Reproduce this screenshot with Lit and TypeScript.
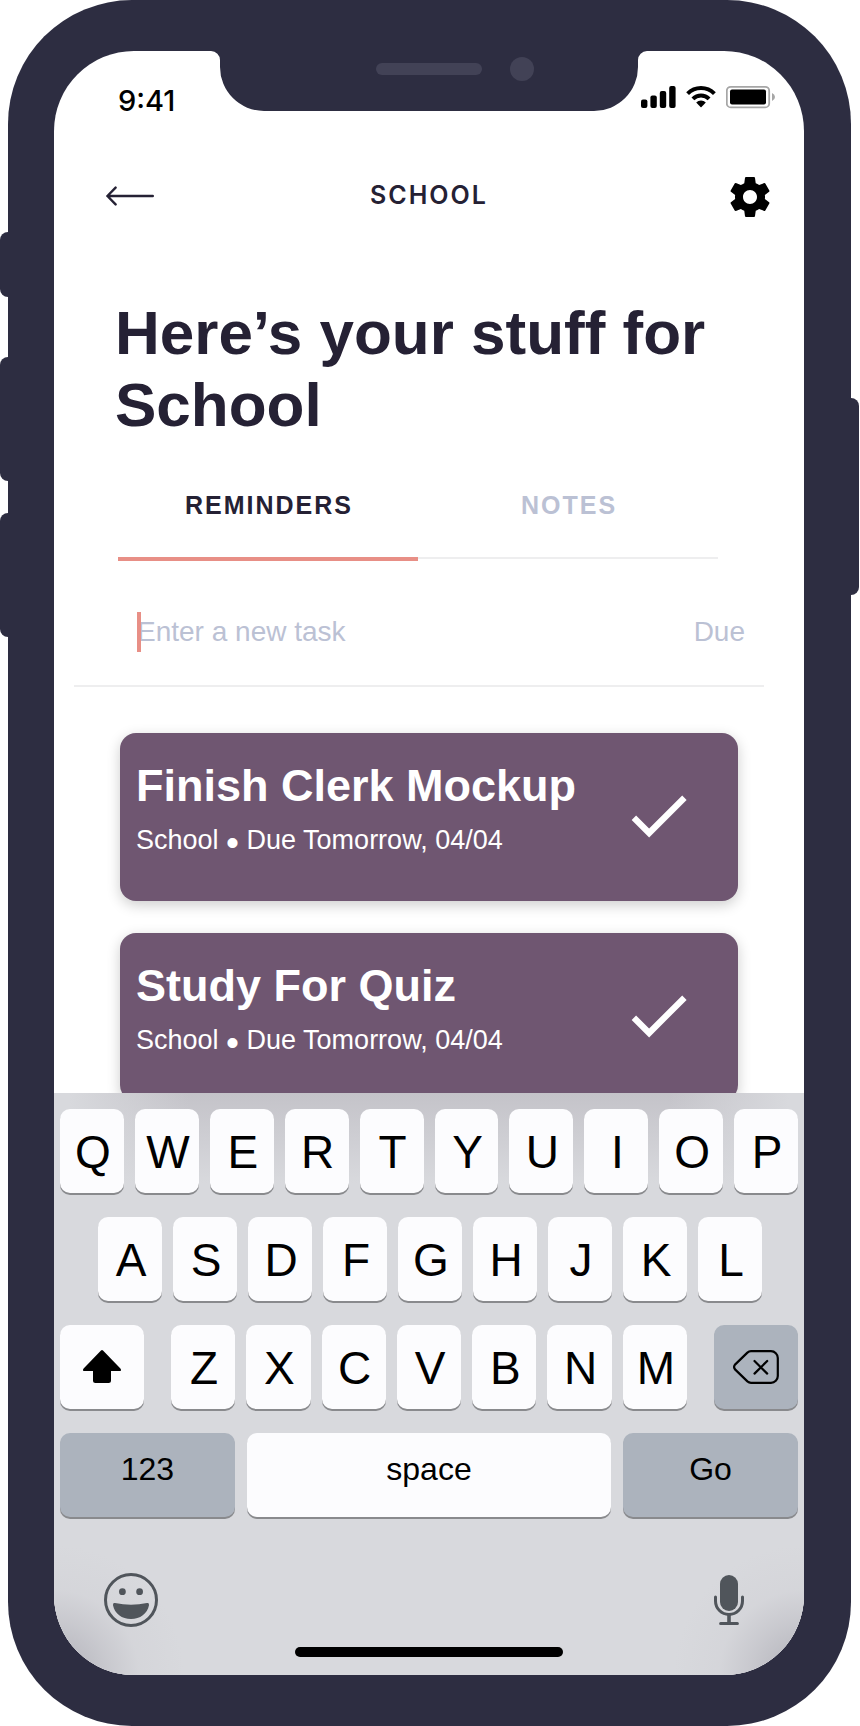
import { LitElement, html, css, svg } from "lit";
import { customElement, property, state } from "lit/decorators.js";
import { classMap } from "lit/directives/class-map.js";

interface Task {
  title: string;
  list: string;
  due: string;
}

const TASKS: Task[] = [
  { title: "Finish Clerk Mockup", list: "School", due: "Due Tomorrow, 04/04" },
  { title: "Study For Quiz", list: "School", due: "Due Tomorrow, 04/04" },
];

const GEAR = svg`<path d="M19.43 12.98c.04-.32.07-.64.07-.98s-.03-.66-.07-.98l2.11-1.65c.19-.15.24-.42.12-.64l-2-3.46c-.12-.22-.39-.3-.61-.22l-2.49 1c-.52-.4-1.08-.73-1.69-.98l-.38-2.65C14.46 2.18 14.25 2 14 2h-4c-.25 0-.46.18-.49.42l-.38 2.65c-.61.25-1.17.59-1.69.98l-2.49-1c-.23-.09-.49 0-.61.22l-2 3.46c-.13.22-.07.49.12.64l2.11 1.65c-.04.32-.07.65-.07.98s.03.66.07.98l-2.11 1.65c-.19.15-.24.42-.12.64l2 3.46c.12.22.39.3.61.22l2.49-1c.52.4 1.08.73 1.69.98l.38 2.65c.03.24.24.42.49.42h4c.25 0 .46-.18.49-.42l.38-2.65c.61-.25 1.17-.59 1.69-.98l2.49 1c.23.09.49 0 .61-.22l2-3.46c.12-.22.07-.49-.12-.64l-2.11-1.65zM12 15.5c-1.93 0-3.5-1.57-3.5-3.5s1.57-3.5 3.5-3.5 3.5 1.57 3.5 3.5-1.57 3.5-3.5 3.5z"/>`;

const buttonReset = css`
  * {
    box-sizing: border-box;
  }
  button {
    margin: 0;
    padding: 0;
    border: 0;
    background: none;
    color: inherit;
    font: inherit;
    cursor: pointer;
  }
  svg {
    display: block;
  }
`;

@customElement("status-bar")
export class StatusBar extends LitElement {
  static styles = css`
    :host {
      display: grid;
      grid-template-columns: 1fr 418px 1fr;
      align-items: start;
      height: 122px;
      color: #000;
    }
    svg {
      display: block;
    }
    .time {
      padding: 33px 0 0 64px;
      font: 500 29px/34px Inter, sans-serif;
    }
    .notch {
      overflow: visible;
    }
    .icons {
      display: flex;
      align-items: center;
      gap: 10px;
      padding: 34px 0 0 3px;
    }
  `;

  render() {
    return html`
      <div class="time">9:41</div>
      <svg class="notch" width="418" height="60" viewBox="0 0 418 60" aria-hidden="true">
        <path fill="#2d2d41" d="M-9 0A9 9 0 0 1 0 9V16A44 44 0 0 0 44 60H374A44 44 0 0 0 418 16V9A9 9 0 0 1 427 0Z" />
        <rect x="156" y="12" width="106" height="12" rx="6" fill="#424256" />
        <circle cx="302" cy="18" r="12" fill="#424256" />
      </svg>
      <div class="icons">
        <svg width="35" height="24" viewBox="0 0 35 24" role="img" aria-label="Signal">
          <rect x="0" y="14.5" width="6.4" height="8.5" rx="2" />
          <rect x="9.4" y="10.5" width="6.4" height="12.5" rx="2" />
          <rect x="18.8" y="6" width="6.4" height="17" rx="2" />
          <rect x="28.2" y="1" width="6.4" height="22" rx="2" />
        </svg>
        <svg width="30" height="24" viewBox="0 0 30 24" role="img" aria-label="Wi-Fi">
          <g fill="none" stroke="#000" stroke-width="4">
            <path d="M1.6 8.6A19 19 0 0 1 28.4 8.6" />
            <path d="M6.9 13.9A11.5 11.5 0 0 1 23.1 13.9" />
          </g>
          <path d="M10.2 17.4A6.8 6.8 0 0 1 19.8 17.4L15.5 22Q15 22.5 14.5 22Z" />
        </svg>
        <svg width="50" height="24" viewBox="0 0 50 24" role="img" aria-label="Battery">
          <rect x=".8" y="1.8" width="42.4" height="20.6" rx="4" fill="none" stroke="#a6a6a6" stroke-width="1.8" />
          <rect x="4" y="4.6" width="36" height="15" rx="2" />
          <path d="M46 8Q49 9.3 49 12T46 16Z" fill="#a6a6a6" />
        </svg>
      </div>
    `;
  }
}

@customElement("task-card")
export class TaskCard extends LitElement {
  static styles = [
    buttonReset,
    css`
      :host {
        display: block;
      }
      .card {
        display: flex;
        align-items: flex-start;
        justify-content: space-between;
        min-height: 168px;
        padding: 27px 42px 25px 16px;
        border-radius: 16px;
        background: #6f5671;
        color: #fff;
        box-shadow: 0 4px 14px rgba(0, 0, 0, 0.2);
      }
      .text {
        display: flex;
        flex-direction: column;
        gap: 11px;
        min-width: 0;
      }
      h2 {
        margin: 0;
        font-size: 45px;
        line-height: 52px;
        font-weight: 700;
      }
      p {
        margin: 0;
        font-size: 27px;
        line-height: 34px;
      }
      .dot {
        font-size: 37px;
        line-height: 0;
        vertical-align: -6px;
      }
      .done {
        flex: none;
        margin-top: 18px;
      }
    `,
  ];

  @property({ attribute: false }) task!: Task;

  render() {
    return html`
      <article class="card">
        <div class="text">
          <h2>${this.task.title}</h2>
          <p>${this.task.list} <span class="dot">•</span> ${this.task.due}</p>
        </div>
        <button class="done" aria-label="Mark ${this.task.title} as done">
          <svg width="75" height="75" viewBox="0 0 24 24" fill="#fff">
            <path d="M9 16.17L4.83 12l-1.42 1.41L9 19 21 7l-1.41-1.41z" />
          </svg>
        </button>
      </article>
    `;
  }
}

@customElement("touch-keyboard")
export class TouchKeyboard extends LitElement {
  static styles = [
    buttonReset,
    css`
      :host {
        display: flex;
        flex-direction: column;
        padding-top: 16px;
        padding-bottom: 18px;
        color: #000;
        background:
          radial-gradient(circle at 0 100%, #b9b9c0 20px, rgba(196, 196, 202, 0.75) 55px, rgba(208, 208, 213, 0.4) 85px, rgba(216, 217, 221, 0) 130px),
          radial-gradient(circle at 100% 100%, #b9b9c0 20px, rgba(196, 196, 202, 0.75) 55px, rgba(208, 208, 213, 0.4) 85px, rgba(216, 217, 221, 0) 130px),
          linear-gradient(to right, #d8d9dd 2%, rgba(216, 217, 221, 0) 18%, rgba(216, 217, 221, 0) 82%, #d8d9dd 98%),
          linear-gradient(to bottom, #c4c3c9 0, #d8d9dd 90px);
      }
      .rows {
        display: flex;
        flex-direction: column;
        gap: 24px;
        padding: 0 6px;
      }
      .row,
      .letters {
        display: flex;
        gap: 11px;
      }
      .row.inset {
        padding: 0 36px 0 38px;
      }
      .row.wide {
        gap: 12px;
      }
      .row.split {
        gap: 27px;
      }
      .letters {
        flex: 1;
      }
      .key {
        display: flex;
        align-items: center;
        justify-content: center;
        flex: 1 1 0;
        min-width: 0;
        height: 84px;
        border-radius: 10px;
        background: #fcfcfe;
        box-shadow: 0 2px 0 #898a8d;
        font-size: 46px;
        line-height: 52px;
      }
      .key.letter {
        padding: 2px 0 0 2px;
      }
      .key.side {
        flex: none;
        width: 84px;
      }
      .key.dark {
        background: #acb3bd;
      }
      .key.word {
        padding-bottom: 12px;
        font-size: 32px;
        line-height: 36px;
      }
      .row.wide {
        display: grid;
        grid-template-columns: 12fr 25fr 12fr;
      }
      .tools {
        display: flex;
        align-items: center;
        justify-content: space-between;
        padding: 56px 60px 20px 50px;
      }
      .home {
        align-self: center;
        width: 268px;
        height: 10px;
        border-radius: 5px;
        background: #000;
      }
    `,
  ];

  private keys(letters: string) {
    return [...letters].map((c) => html`<button class="key letter">${c}</button>`);
  }

  render() {
    return html`
      <div class="rows">
        <div class="row">${this.keys("QWERTYUIOP")}</div>
        <div class="row inset">${this.keys("ASDFGHJKL")}</div>
        <div class="row split">
          <button class="key side" aria-label="Shift">
            <svg width="38" height="36" viewBox="0 0 38 36">
              <path d="M18 1.6Q19 .6 20 1.6L37.4 19.4Q39 22 36.4 22H28V31.5Q28 34 25.5 34H12.5Q10 34 10 31.5V22H1.6Q-1 22 .6 19.4Z" />
            </svg>
          </button>
          <div class="letters">${this.keys("ZXCVBNM")}</div>
          <button class="key side dark" aria-label="Delete">
            <svg width="46" height="34" viewBox="0 0 46 34" fill="none" stroke="#000" stroke-width="2.2" stroke-linecap="round" stroke-linejoin="round">
              <path d="M18 1.2H38A6.8 6.8 0 0 1 44.8 8V26A6.8 6.8 0 0 1 38 32.8H18Q16 32.8 14.4 31.4L2 19.4Q.2 17 2 14.6L14.4 2.6Q16 1.2 18 1.2Z" />
              <path d="M21.5 11L34.2 23.6M34.2 11L21.5 23.6" />
            </svg>
          </button>
        </div>
        <div class="row wide">
          <button class="key word dark">123</button>
          <button class="key word">space</button>
          <button class="key word dark">Go</button>
        </div>
      </div>
      <div class="tools">
        <button aria-label="Emoji">
          <svg width="54" height="54" viewBox="0 0 54 54" fill="#50555b">
            <circle cx="27" cy="27" r="25.5" fill="none" stroke="#50555b" stroke-width="3" />
            <circle cx="18.4" cy="18.7" r="3.4" />
            <circle cx="35.6" cy="18.7" r="3.4" />
            <path d="M11 30Q27 33.5 43 30Q45.4 29.6 45 32.2C43.4 40.6 36 46 27 46S10.6 40.6 9 32.2Q8.6 29.6 11 30Z" />
          </svg>
        </button>
        <button aria-label="Dictate">
          <svg width="30" height="50" viewBox="0 0 30 50" fill="none" stroke="#50555b" stroke-width="3" stroke-linecap="round">
            <rect x="6" y="0" width="18" height="36" rx="9" fill="#50555b" stroke="none" />
            <path d="M1.5 22V26A13.5 13.5 0 0 0 28.5 26V22M6.6 48.4H23.4" />
            <path d="M15 40V48" stroke-width="3.6" />
          </svg>
        </button>
      </div>
      <div class="home"></div>
    `;
  }
}

@customElement("app-root")
export class AppRoot extends LitElement {
  static styles = [
    buttonReset,
    css`
      :host {
        display: grid;
        grid-template-columns: 8px minmax(0, 1fr) 9px;
        min-height: 100vh;
        background: #fff;
        color: #252134;
        font-family: "Liberation Sans", Arial, sans-serif;
      }
      .rail {
        display: flex;
        flex-direction: column;
      }
      .rail.left {
        padding-top: 232px;
      }
      .rail.right {
        padding: 398px 1px 0 0;
      }
      .switch,
      .volume,
      .power {
        background: #2d2d41;
      }
      .switch {
        height: 65px;
        margin-bottom: 60px;
        border-radius: 8px 0 0 8px;
      }
      .volume {
        height: 124px;
        margin-bottom: 32px;
        border-radius: 8px 0 0 8px;
      }
      .power {
        height: 197px;
        border-radius: 0 8px 8px 0;
      }
      .phone {
        display: flex;
        padding: 51px 47px 51px 46px;
        border-radius: 124px;
        background: #2d2d41;
      }
      .screen {
        display: flex;
        flex: 1;
        flex-direction: column;
        min-width: 0;
        overflow: hidden;
        border-radius: 80px;
        background: #fff;
      }
      .header {
        display: grid;
        grid-template-columns: 1fr auto 1fr;
        align-items: start;
        padding: 0 30px;
      }
      .back {
        justify-self: start;
        padding: 13px 0 13px 22px;
      }
      .settings {
        justify-self: end;
      }
      .title {
        font: 600 25px/44px Inter, sans-serif;
        letter-spacing: 2px;
      }
      h1 {
        margin: 0;
        padding: 76px 60px 1px 61px;
        font-size: 62px;
        line-height: 72px;
        font-weight: 700;
      }
      .tabs {
        display: flex;
        align-items: flex-start;
        height: 119px;
        padding: 11px 86px 0 64px;
      }
      .tab {
        flex: 1;
        padding-left: 2px;
        border-bottom: 2px solid #eeeeef;
        color: #bbc1d4;
        font-size: 25px;
        line-height: 104px;
        font-weight: 700;
        letter-spacing: 2px;
      }
      .tab.active {
        border-bottom: 4px solid #e88f86;
        color: #252134;
      }
      .entry {
        display: flex;
        margin: 0 40px 0 20px;
        padding: 51px 19px 33px 63px;
        border-bottom: 2px solid #eeeeef;
        color: #bbc1d4;
        font-size: 28px;
        line-height: 40px;
      }
      .field {
        position: relative;
        flex: 1;
        display: flex;
      }
      .caret {
        position: absolute;
        left: 0;
        top: 0;
        width: 4px;
        height: 100%;
        background: #e88f86;
      }
      input {
        flex: 1;
        min-width: 0;
        height: 40px;
        margin: 0;
        padding: 0;
        border: 0;
        outline: 0;
        background: none;
        color: #252134;
        font: inherit;
      }
      input::placeholder {
        color: #bbc1d4;
        opacity: 1;
      }
      .tasks {
        display: flex;
        flex: 1 0 360px;
        flex-direction: column;
        gap: 32px;
        height: 360px;
        padding: 46px 66px 0;
        overflow: hidden;
      }
    `,
  ];

  @state() private tab = "REMINDERS";

  render() {
    return html`
      <div class="rail left">
        <div class="switch"></div>
        <div class="volume"></div>
        <div class="volume"></div>
      </div>
      <div class="phone">
        <main class="screen">
          <status-bar></status-bar>
          <header class="header">
            <button class="back" aria-label="Back">
              <svg width="48" height="20" viewBox="0 0 48 20" fill="none" stroke="#252134" stroke-width="2.4" stroke-linecap="round" stroke-linejoin="round">
                <path d="M1.4 10H46.8M9.6 1.6L1.4 10L9.6 18.4" />
              </svg>
            </button>
            <div class="title">SCHOOL</div>
            <button class="settings" aria-label="Settings">
              <svg width="48" height="48" viewBox="0 0 24 24">${GEAR}</svg>
            </button>
          </header>
          <h1>Here’s your stuff for School</h1>
          <div class="tabs" role="tablist">
            ${["REMINDERS", "NOTES"].map(
              (name) => html`<button
                role="tab"
                aria-selected=${this.tab === name ? "true" : "false"}
                class=${classMap({ tab: true, active: this.tab === name })}
                @click=${() => (this.tab = name)}
              >${name}</button>`
            )}
          </div>
          <div class="entry">
            <label class="field">
              <input type="text" placeholder="Enter a new task" aria-label="New task" />
              <span class="caret"></span>
            </label>
            <button>Due</button>
          </div>
          <section class="tasks">
            ${TASKS.map((task) => html`<task-card .task=${task}></task-card>`)}
          </section>
          <touch-keyboard></touch-keyboard>
        </main>
      </div>
      <div class="rail right">
        <div class="power"></div>
      </div>
    `;
  }
}
